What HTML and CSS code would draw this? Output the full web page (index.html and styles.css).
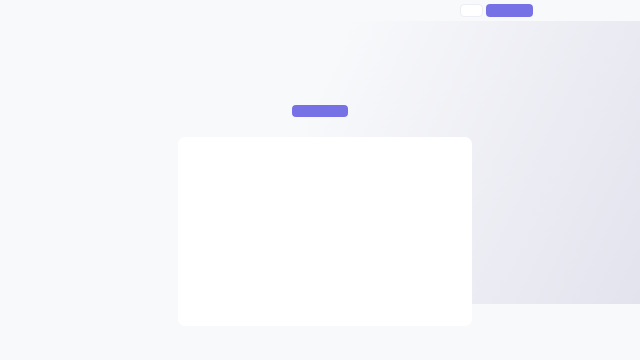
FILE: index.html
```html
<!DOCTYPE html>
<html lang="en">
<head>
  <meta charset="UTF-8">
  <meta name="viewport" content="width=device-width, initial-scale=1.0">
  <title>Landing</title>
  <link rel="stylesheet" href="styles.css">
</head>
<body>

  <!-- Top bar -->
  <header class="topbar">
    <button class="btn btn-ghost" aria-label="Sign in"></button>
    <button class="btn btn-primary" aria-label="Get started"></button>
  </header>

  <!-- Hero -->
  <section class="hero">
    <span class="hero-pill"></span>
    <div class="hero-card"></div>
  </section>

  <footer class="footer"></footer>

</body>
</html>
```

FILE: styles.css
```css
body {
  margin: 0;
  font-family: 'Inter', 'Liberation Sans', sans-serif;
  background-color: #f8f9fb;
  height: 360px;
  overflow: hidden;
}

/* Top bar */
.topbar {
  display: flex;
  justify-content: flex-end;
  align-items: center;
  gap: 3px;
  height: 21px;
  padding-right: 107px;
  background-color: #f8f9fb;
}

.btn {
  height: 13px;
  border: none;
  border-radius: 4px;
  padding: 0;
  cursor: pointer;
}

.btn-ghost {
  width: 23px;
  background-color: #fff;
  border: 1px solid #eceef3;
}

.btn-primary {
  width: 47px;
  background-color: #7672e5;
}

/* Hero */
.hero {
  display: flex;
  flex-direction: column;
  height: 283px;
  padding-top: 84px;
  box-sizing: border-box;
  background: linear-gradient(115deg, #f8f9fb 45%, #e3e3ee 100%);
}

.hero-pill {
  align-self: center;
  flex-shrink: 0;
  width: 56px;
  height: 12px;
  border-radius: 4px;
  background-color: #7672e5;
}

.hero-card {
  flex-shrink: 0;
  width: 294px;
  height: 189px;
  margin: 20px 0 0 178px;
  border-radius: 7px;
  background-color: #fff;
}

.footer {
  height: 56px;
}
```
